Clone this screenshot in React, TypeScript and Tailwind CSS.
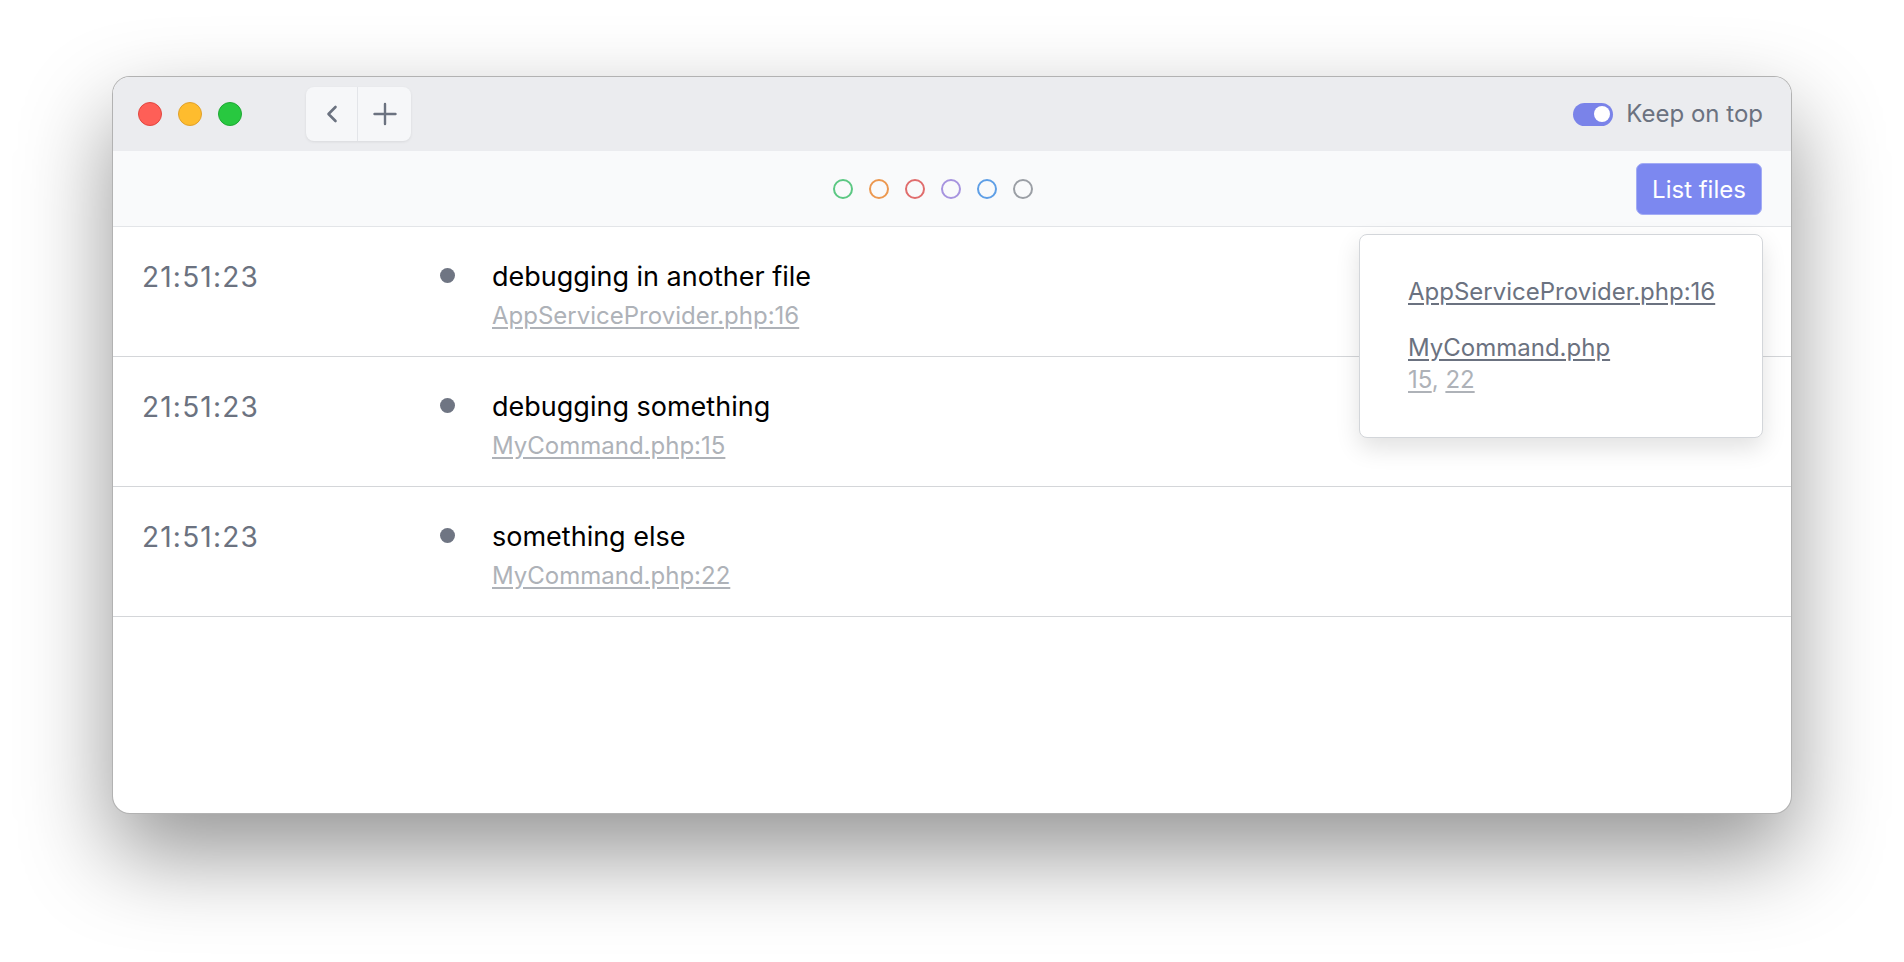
import React from "react";

interface LogRow {
  time: string;
  message: string;
  file: string;
}

const rows: LogRow[] = [
  { time: "21:51:23", message: "debugging in another file", file: "AppServiceProvider.php:16" },
  { time: "21:51:23", message: "debugging something", file: "MyCommand.php:15" },
  { time: "21:51:23", message: "something else", file: "MyCommand.php:22" },
];

const colorRings = [
  "border-[#5cc883]",
  "border-[#ec9850]",
  "border-[#e06d6d]",
  "border-[#a794df]",
  "border-[#5f9fe6]",
  "border-[#9b9fa5]",
];

const App: React.FC = () => {
  return (
    <div
      className="min-h-screen bg-white pl-[112px] pt-[76px]"
      style={{ fontFamily: "Inter, 'Noto Sans', sans-serif" }}
    >
      <div className="relative flex h-[738px] w-[1680px] flex-col overflow-hidden rounded-[18px] border border-black/30 bg-white shadow-[0_40px_90px_rgba(0,0,0,0.42)]">
        {/* title bar */}
        <div className="flex h-[74px] shrink-0 items-center bg-[#ebecef] pl-[25px] pr-[28px]">
          <div className="flex items-center gap-[16px]">
            <span className="h-[24px] w-[24px] rounded-full border border-[#e2463f] bg-[#fe5f57]" />
            <span className="h-[24px] w-[24px] rounded-full border border-[#e1a12b] bg-[#febc2e]" />
            <span className="h-[24px] w-[24px] rounded-full border border-[#1fa834] bg-[#28c840]" />
          </div>

          <div className="ml-[64px] flex h-[54px] overflow-hidden rounded-[8px] bg-[#f6f7f9] shadow-[0_1px_3px_rgba(0,0,0,0.08)]">
            <button className="flex w-[52px] items-center justify-center border-r border-[#e3e5e9] text-[#6b7280]">
              <svg width="12" height="18" viewBox="0 0 12 18" fill="none">
                <path d="M9.5 2 L2.5 9 L9.5 16" stroke="currentColor" strokeWidth="2.6" strokeLinecap="round" strokeLinejoin="round" />
              </svg>
            </button>
            <button className="flex w-[53px] items-center justify-center text-[#6b7280]">
              <svg width="24" height="24" viewBox="0 0 24 24" fill="none">
                <path d="M12 2 V22 M1.5 12 H22.5" stroke="currentColor" strokeWidth="2.4" strokeLinecap="round" />
              </svg>
            </button>
          </div>

          <div className="ml-auto flex items-center gap-[13px]">
            <span className="flex h-[23px] w-[40px] items-center justify-end rounded-full bg-[#7a83e9] pr-[3px]">
              <span className="h-[16px] w-[16px] rounded-full bg-white" />
            </span>
            <span className="text-[24px] leading-[32px] text-[#6b7280]">Keep on top</span>
          </div>
        </div>

        {/* toolbar */}
        <div className="relative flex h-[76px] shrink-0 items-center border-b border-[#e3e5e8] bg-[#f9fafb] pl-[116px] pr-[29px]">
          <div className="flex flex-1 items-center justify-center gap-[16px] pt-[1px]">
            {colorRings.map((c) => (
              <span key={c} className={`h-[20px] w-[20px] rounded-full border-2 ${c}`} />
            ))}
          </div>
          <button className="h-[52px] w-[126px] rounded-[7px] border border-[#a3acf5] bg-[#7c88f0] pt-[3px] text-[24px] leading-[32px] text-white">
            List files
          </button>

          {/* file list dropdown */}
          <div className="absolute right-[28px] top-full z-10 mt-[8px] w-[404px] rounded-[8px] border border-[#d3d6da] bg-white pb-[42px] pl-[48px] pt-[41px] shadow-[0_10px_25px_rgba(0,0,0,0.12)]">
            <div className="text-[24px] leading-[32px] text-[#6b7280] underline underline-offset-[3px]">
              AppServiceProvider.php:16
            </div>
            <div className="mt-[24px] text-[24px] leading-[32px] text-[#6b7280] underline underline-offset-[3px]">
              MyCommand.php
            </div>
            <div className="text-[24px] leading-[31px] text-[#aeb2b8]">
              <span className="underline underline-offset-[3px]">15</span>,{" "}
              <span className="underline underline-offset-[3px]">22</span>
            </div>
          </div>
        </div>

        {/* log rows */}
        <div className="flex flex-col">
          {rows.map((row, i) => (
            <div key={i} className="flex h-[130px] border-b border-[#d4d6d9] px-[29px] pt-[32px]">
              <div className="w-[298px] text-[28px] leading-[36px] tracking-[1.2px] text-[#6b7280]">{row.time}</div>
              <div className="w-[52px]">
                <span className="mt-[9px] block h-[15px] w-[15px] rounded-full bg-[#6f7583]" />
              </div>
              <div className="flex flex-col">
                <span className="text-[27px] leading-[36px] text-black">{row.message}</span>
                <span className="mt-[5px] text-[24px] leading-[32px] text-[#aeb2b8] underline underline-offset-[3px]">
                  {row.file}
                </span>
              </div>
            </div>
          ))}
        </div>
      </div>
    </div>
  );
};

export default App;
